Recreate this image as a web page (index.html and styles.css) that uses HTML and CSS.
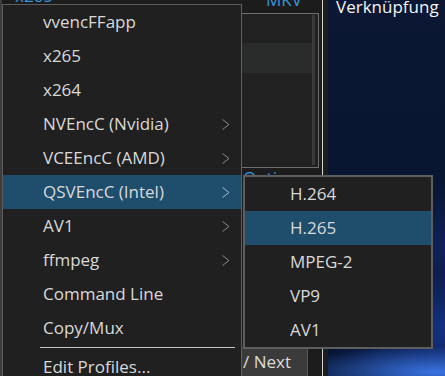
FILE: index.html
```html
<!DOCTYPE html>
<html>
<head>
<meta charset="utf-8">
<link rel="stylesheet" href="styles.css">
</head>
<body>
<div class="screen">
  <div class="app">
    <div class="win">
      <div class="topbar">
        <span class="tb-left">x265</span>
        <span class="tb-mkv">MKV</span>
      </div>
      <div class="work">
        <div class="panel">
          <div class="list">
            <div class="row"></div>
            <div class="row sel"></div>
            <div class="row"></div>
            <div class="row"></div>
            <div class="row"></div>
          </div>
          <div class="scroll"></div>
        </div>
        <div class="options">Options</div>
        <div class="spacer"></div>
        <div class="btn">/ Next</div>
      </div>
    </div>
    <div class="edge"></div>
  </div>
  <div class="desktop">
    <div class="shortcut">Verknüpfung</div>
  </div>

  <div class="menu main">
    <div class="item">vvencFFapp</div>
    <div class="item">x265</div>
    <div class="item">x264</div>
    <div class="item">NVEncC (Nvidia)<svg class="chev" width="8" height="11" viewBox="0 0 8 11"><polyline points="0.5,0.5 7,5.5 0.5,10.5" fill="none" stroke="currentColor" stroke-width="1"/></svg></div>
    <div class="item">VCEEncC (AMD)<svg class="chev" width="8" height="11" viewBox="0 0 8 11"><polyline points="0.5,0.5 7,5.5 0.5,10.5" fill="none" stroke="currentColor" stroke-width="1"/></svg></div>
    <div class="item active">QSVEncC (Intel)<svg class="chev" width="8" height="11" viewBox="0 0 8 11"><polyline points="0.5,0.5 7,5.5 0.5,10.5" fill="none" stroke="currentColor" stroke-width="1"/></svg></div>
    <div class="item">AV1<svg class="chev" width="8" height="11" viewBox="0 0 8 11"><polyline points="0.5,0.5 7,5.5 0.5,10.5" fill="none" stroke="currentColor" stroke-width="1"/></svg></div>
    <div class="item">ffmpeg<svg class="chev" width="8" height="11" viewBox="0 0 8 11"><polyline points="0.5,0.5 7,5.5 0.5,10.5" fill="none" stroke="currentColor" stroke-width="1"/></svg></div>
    <div class="item">Command Line</div>
    <div class="item">Copy/Mux</div>
    <div class="sep"></div>
    <div class="item">Edit Profiles...</div>
  </div>

  <div class="menu sub">
    <div class="item">H.264</div>
    <div class="item active">H.265</div>
    <div class="item">MPEG-2</div>
    <div class="item">VP9</div>
    <div class="item">AV1</div>
  </div>
</div>
</body>
</html>
```
FILE: styles.css
```css
* {
  box-sizing: border-box;
  margin: 0;
  padding: 0;
}

body {
  margin: 0;
  background: #111;
  font-family: "Open Sans", "Noto Sans", sans-serif;
  font-size: 17px;
  line-height: 20px;
}

.screen {
  position: relative;
  width: 445px;
  height: 376px;
  overflow: hidden;
  display: flex;
}

/* background application window */
.app {
  width: 328px;
  flex: none;
  display: flex;
}

.win {
  flex: 1;
  display: flex;
  flex-direction: column;
  background: #1c1c1c;
  border-left: 2px solid #3c3c3c;
  border-right: 1px solid #d4d4d4;
}

.edge {
  width: 5px;
  background: #1d1d1d;
}

.topbar {
  height: 13px;
  flex: none;
  display: flex;
  align-items: flex-start;
  overflow: hidden;
  color: #3a96dd;
}

.tb-left {
  width: 251px;
  margin-left: 13px;
  margin-top: -14px;
  flex: none;
}

.tb-mkv {
  margin-top: -10px;
}

.work {
  flex: 1;
  display: flex;
  flex-direction: column;
}

.panel {
  height: 155px;
  margin-left: 100px;
  margin-right: 3px;
  border: 1px solid #6e6e6e;
  background: #212121;
  display: flex;
}

.list {
  flex: 1;
}

.row {
  height: 30px;
}

.row:first-child {
  height: 29px;
}

.row.sel {
  background: #2a2c2b;
}

.scroll {
  width: 3px;
  margin: 1px 3px 2px 0;
  background: #3a3a3a;
}

.options {
  margin-left: 241px;
  color: #3a96dd;
}

.spacer {
  flex: 1;
}

.btn {
  height: 30px;
  width: 66px;
  margin-left: 240px;
  padding: 6px 0 0 1px;
  background: #3b3b3b;
  border-right: 1px solid #555;
  color: #dcdcdc;
}

/* desktop */
.desktop {
  flex: 1;
  background:
    radial-gradient(ellipse 150px 26px at 110px 372px, rgba(60, 120, 235, 0.95), rgba(40, 90, 210, 0) 100%),
    radial-gradient(ellipse 130px 60px at 130px 330px, rgba(25, 60, 160, 0.8), rgba(20, 50, 140, 0) 100%),
    radial-gradient(ellipse 120px 70px at 120px 250px, rgba(20, 45, 120, 0.55), rgba(20, 45, 120, 0) 100%),
    linear-gradient(180deg, #0c1833 0%, #081632 45%, #071535 100%);
}

.shortcut {
  padding-left: 8px;
  line-height: 14px;
  color: #f4f4f4;
  white-space: nowrap;
}

/* menus */
.menu {
  position: absolute;
  background: #202020;
  color: #d9d9d9;
}

.main {
  left: 2px;
  top: 4px;
  width: 240px;
  border: 1px solid #5e5e5e;
  border-bottom: none;
}

.sub {
  left: 243px;
  top: 175px;
  width: 190px;
  border: 2px solid #5e5e5e;
}

.item {
  height: 34px;
  display: flex;
  align-items: center;
  white-space: nowrap;
}

.main .item {
  padding: 0 11px 0 40px;
}

.sub .item {
  padding-left: 45px;
}

.item.active {
  background: #1f4d6c;
}

.chev {
  margin-left: auto;
  color: #8a8a8a;
}

.item.active .chev {
  color: #a9bccb;
}

.sep {
  height: 1px;
  margin: 2px 6px 2px 37px;
  background: #c4c4c4;
}
```
